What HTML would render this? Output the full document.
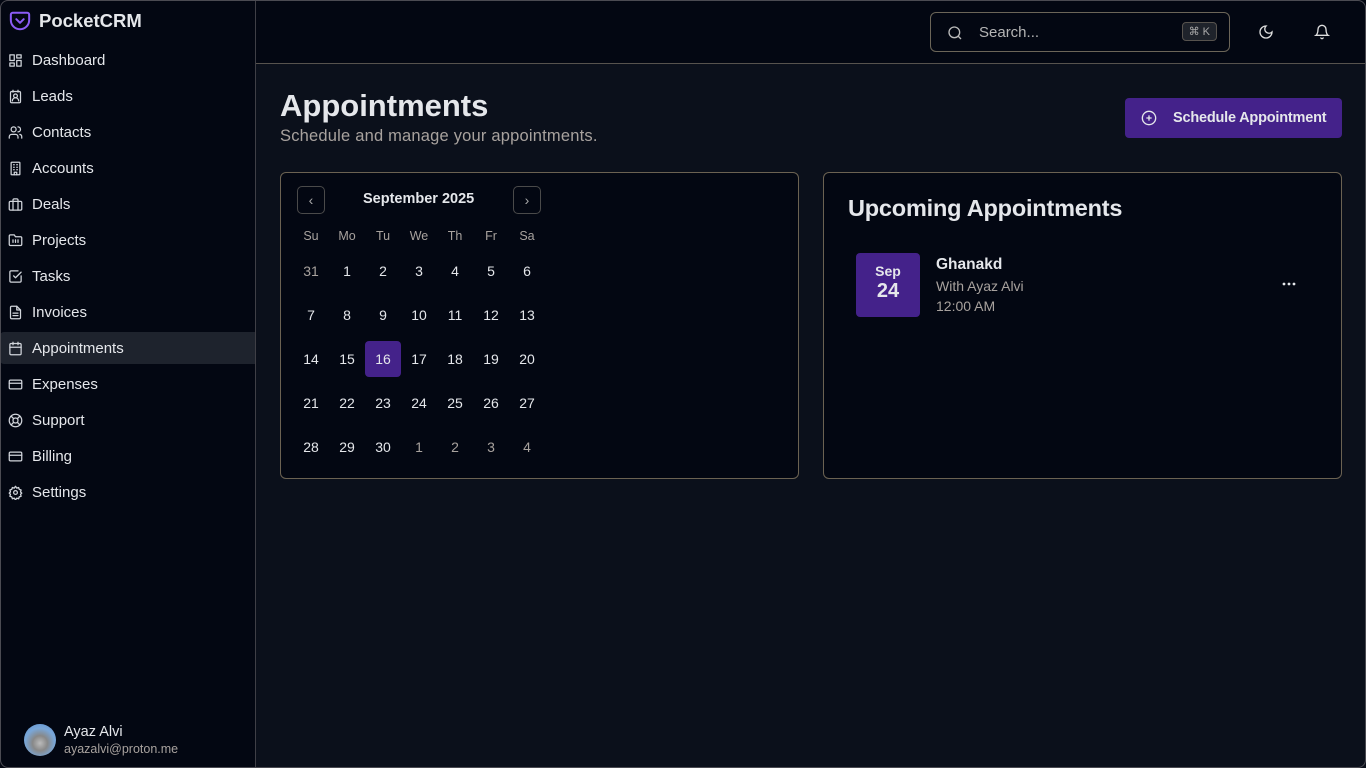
<!DOCTYPE html>
<html><head><meta charset="utf-8"><style>
*{box-sizing:border-box;margin:0;padding:0}
body{width:1366px;height:768px;overflow:hidden;background:#0b101b;font-family:"Liberation Sans",sans-serif;color:#e5e7eb;position:relative}
.frame{position:absolute;inset:0;border:1px solid #4b4b52;border-radius:8px;pointer-events:none;z-index:5}
.side{position:absolute;left:0;top:0;width:256px;height:768px;background:#030712;border-right:1px solid #3f3f46}
.logo{position:absolute;left:9px;top:10px;display:flex;align-items:center;gap:8px;font-size:18.5px;font-weight:bold;color:#e5e7eb}
.nav{position:absolute;left:0;top:42px;width:255px}
.nav div{height:36px;display:flex;align-items:center;padding-left:8px;padding-top:1px;font-size:15px;color:#e5e7eb;gap:9px}
.nav div.act{background:#1e232d;height:32px;margin:2px 0;border-radius:4px 0 0 4px}
.nav svg{width:15px;height:15px;stroke:#d1d5db;fill:none;stroke-width:2;stroke-linecap:round;stroke-linejoin:round}
.user{position:absolute;left:24px;top:724px;display:flex;gap:8px;align-items:center}
.av{width:32px;height:32px;border-radius:50%;background:radial-gradient(circle at 50% 60%,#bbb 0,#888 30%,#7aa7d8 60%,#5b8fcf 100%)}
.top{position:absolute;left:256px;top:0;right:0;height:64px;background:#030712;border-bottom:1px solid #57534e}
.search{position:absolute;left:674px;top:12px;width:300px;height:40px;border:1px solid #6b6558;border-radius:6px;display:flex;align-items:center;padding-left:48px;font-size:15px;color:#b5b5b5}
.kbd{position:absolute;right:12px;top:9px;border:1px solid #57534e;background:#1f232b;border-radius:4px;font-size:11px;padding:2px 6px;color:#aaa}
h1{position:absolute;left:280px;top:88px;font-size:31px;font-weight:bold;color:#e5e7eb}
.sub{position:absolute;left:280px;top:127px;font-size:16.5px;color:#a8a29e;letter-spacing:0.2px}
.btn{position:absolute;left:1125px;top:98px;width:217px;height:40px;background:#44228a;border-radius:4px;color:#e5e7eb;font-size:14.5px;font-weight:bold;display:flex;align-items:center;padding-left:48px;letter-spacing:-0.2px}
.card{position:absolute;top:172px;height:307px;background:#030712;border:1px solid #6b6252;border-radius:6px}
.cal{left:280px;width:519px}
.up{left:823px;width:519px}
.nb{position:absolute;top:13px;width:28px;height:28px;border:1px solid #4a4a4a;border-radius:5px;color:#aaa;font-size:14px;display:flex;align-items:center;justify-content:center}
.grid{position:absolute;left:12px;top:51px}
.row{display:flex}
.row span{width:36px;text-align:center;font-size:14px}
.hd span{font-size:12.5px;color:#a8a29e;height:24px;line-height:24px}
.dr span{height:36px;line-height:36px;margin-bottom:8px;color:#e5e7eb;border-radius:4px}
.dr span.o{color:#a8a29e}
.dr span.s{background:#44228a}
</style></head><body>
<div class="frame"></div>
<div class="side">
 <div class="logo"><svg width="22" height="22" viewBox="0 0 24 24" fill="none" stroke="#8b5cf6" stroke-width="2.2" stroke-linecap="round" stroke-linejoin="round"><path d="M4 3h16a2 2 0 0 1 2 2v6a10 10 0 0 1-20 0V5a2 2 0 0 1 2-2z"/><path d="M8 10l4 4 4-4"/></svg>PocketCRM</div>
 <div class="nav">
  <div><svg viewBox="0 0 24 24"><rect x="3" y="3" width="7" height="9"/><rect x="14" y="3" width="7" height="5"/><rect x="14" y="12" width="7" height="9"/><rect x="3" y="16" width="7" height="5"/></svg>Dashboard</div>
  <div><svg viewBox="0 0 24 24"><rect x="4" y="4" width="16" height="18" rx="2"/><path d="M8 2v3M16 2v3"/><circle cx="12" cy="11" r="3"/><path d="M7 19a5 5 0 0 1 10 0"/></svg>Leads</div>
  <div><svg viewBox="0 0 24 24"><circle cx="9" cy="7" r="4"/><path d="M2 21v-2a4 4 0 0 1 4-4h6a4 4 0 0 1 4 4v2M16 3a4 4 0 0 1 0 8M22 21v-2a4 4 0 0 0-3-4"/></svg>Contacts</div>
  <div><svg viewBox="0 0 24 24"><rect x="5" y="2" width="14" height="20" rx="1"/><path d="M9 6h1M14 6h1M9 10h1M14 10h1M9 14h1M14 14h1M10 22v-4h4v4"/></svg>Accounts</div>
  <div><svg viewBox="0 0 24 24"><rect x="2" y="7" width="20" height="14" rx="2"/><path d="M16 21V5a2 2 0 0 0-2-2h-4a2 2 0 0 0-2 2v16"/></svg>Deals</div>
  <div><svg viewBox="0 0 24 24"><path d="M4 20h16a2 2 0 0 0 2-2V8a2 2 0 0 0-2-2h-8l-2-3H4a2 2 0 0 0-2 2v13a2 2 0 0 0 2 2z"/><path d="M8 11v4M12 11v4M16 11v4"/></svg>Projects</div>
  <div><svg viewBox="0 0 24 24"><path d="M21 11v8a2 2 0 0 1-2 2H5a2 2 0 0 1-2-2V5a2 2 0 0 1 2-2h11"/><path d="M9 11l3 3 9-9"/></svg>Tasks</div>
  <div><svg viewBox="0 0 24 24"><path d="M14 2H6a2 2 0 0 0-2 2v16a2 2 0 0 0 2 2h12a2 2 0 0 0 2-2V8z"/><path d="M14 2v6h6M8 13h8M8 17h8"/></svg>Invoices</div>
  <div class="act"><svg viewBox="0 0 24 24"><rect x="3" y="4" width="18" height="18" rx="2"/><path d="M16 2v4M8 2v4M3 10h18"/></svg>Appointments</div>
  <div><svg viewBox="0 0 24 24"><rect x="2" y="5" width="20" height="14" rx="2"/><path d="M2 10h20"/></svg>Expenses</div>
  <div><svg viewBox="0 0 24 24"><circle cx="12" cy="12" r="10"/><circle cx="12" cy="12" r="4"/><path d="M5 5l4 4M15 15l4 4M19 5l-4 4M9 15l-4 4"/></svg>Support</div>
  <div><svg viewBox="0 0 24 24"><rect x="2" y="5" width="20" height="14" rx="2"/><path d="M2 10h20"/></svg>Billing</div>
  <div><svg viewBox="0 0 24 24"><circle cx="12" cy="12" r="3"/><path d="M12 2l2 3 3-1 1 3 3 1-1 3 2 2-2 2 1 3-3 1-1 3-3-1-2 3-2-3-3 1-1-3-3-1 1-3-2-2 2-2-1-3 3-1 1-3 3 1z"/></svg>Settings</div>
 </div>
 <div class="user"><div class="av"></div><div><div style="font-size:14.5px;color:#e5e7eb">Ayaz Alvi</div><div style="font-size:12.5px;color:#a8a29e;margin-top:2px">ayazalvi@proton.me</div></div></div>
</div>
<div class="top">
 <div class="search"><svg style="position:absolute;left:16px;top:12px" width="16" height="16" viewBox="0 0 24 24" fill="none" stroke="#bbb" stroke-width="2"><circle cx="11" cy="11" r="8"/><path d="M21 21l-4.3-4.3"/></svg>Search...<span class="kbd">⌘ K</span></div>
 <svg style="position:absolute;left:1002px;top:24px" width="16" height="16" viewBox="0 0 24 24" fill="none" stroke="#ddd" stroke-width="2" stroke-linecap="round"><path d="M12 3a6 6 0 0 0 9 9 9 9 0 1 1-9-9z"/></svg>
 <svg style="position:absolute;left:1058px;top:24px" width="16" height="16" viewBox="0 0 24 24" fill="none" stroke="#ddd" stroke-width="2" stroke-linecap="round"><path d="M6 8a6 6 0 0 1 12 0c0 7 3 9 3 9H3s3-2 3-9M10.3 21a1.9 1.9 0 0 0 3.4 0"/></svg>
</div>
<h1>Appointments</h1>
<div class="sub">Schedule and manage your appointments.</div>
<div class="btn"><svg style="position:absolute;left:16px;top:12px" width="16" height="16" viewBox="0 0 24 24" fill="none" stroke="#e5e7eb" stroke-width="2"><circle cx="12" cy="12" r="10"/><path d="M8 12h8M12 8v8"/></svg>Schedule Appointment</div>
<div class="card cal">
 <div class="nb" style="left:16px">‹</div>
 <div style="position:absolute;left:82px;top:18px;font-size:14.5px;font-weight:bold;color:#e5e7eb">September 2025</div>
 <div class="nb" style="left:232px">›</div>
 <div class="grid">
  <div class="row hd"><span>Su</span><span>Mo</span><span>Tu</span><span>We</span><span>Th</span><span>Fr</span><span>Sa</span></div>
  <div style="height:5px"></div>
  <div class="row dr"><span class="o">31</span><span>1</span><span>2</span><span>3</span><span>4</span><span>5</span><span>6</span></div>
  <div class="row dr"><span>7</span><span>8</span><span>9</span><span>10</span><span>11</span><span>12</span><span>13</span></div>
  <div class="row dr"><span>14</span><span>15</span><span class="s">16</span><span>17</span><span>18</span><span>19</span><span>20</span></div>
  <div class="row dr"><span>21</span><span>22</span><span>23</span><span>24</span><span>25</span><span>26</span><span>27</span></div>
  <div class="row dr"><span>28</span><span>29</span><span>30</span><span class="o">1</span><span class="o">2</span><span class="o">3</span><span class="o">4</span></div>
 </div>
</div>
<div class="card up">
 <div style="position:absolute;left:24px;top:22px;font-size:23.5px;font-weight:bold;color:#e5e7eb;letter-spacing:-0.2px">Upcoming Appointments</div>
 <div style="position:absolute;left:32px;top:80px;width:64px;height:64px;background:#44228a;border-radius:4px;text-align:center;font-weight:bold"><div style="font-size:14px;margin-top:10px">Sep</div><div style="font-size:20px;margin-top:1px">24</div></div>
 <div style="position:absolute;left:112px;top:83px;font-size:15.5px;font-weight:bold">Ghanakd</div>
 <div style="position:absolute;left:112px;top:105px;font-size:14px;color:#a8a29e">With Ayaz Alvi</div>
 <div style="position:absolute;left:112px;top:125px;font-size:14px;color:#a8a29e">12:00 AM</div>
 <svg style="position:absolute;left:458px;top:109px" width="14" height="4" viewBox="0 0 14 4"><circle cx="2" cy="2" r="1.4" fill="#e5e7eb"/><circle cx="7" cy="2" r="1.4" fill="#e5e7eb"/><circle cx="12" cy="2" r="1.4" fill="#e5e7eb"/></svg>
</div>
</body></html>
